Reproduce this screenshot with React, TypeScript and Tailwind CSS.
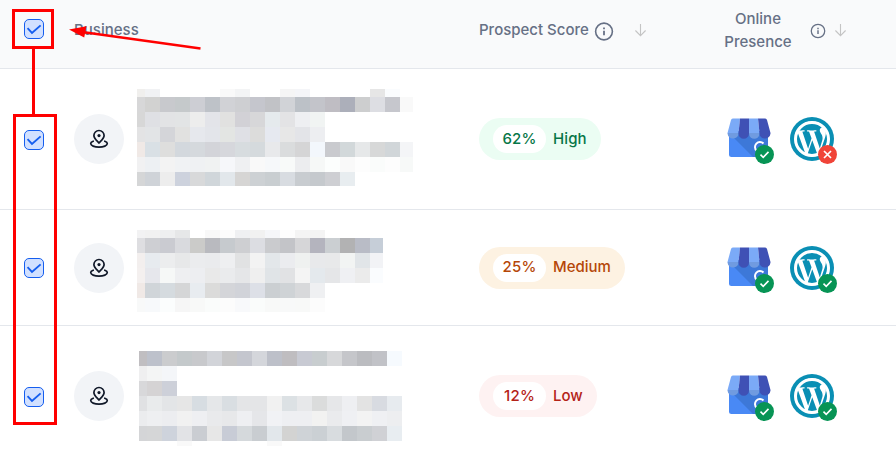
import clsx from 'clsx';
import { FaWordpressSimple } from 'react-icons/fa';

interface Mosaic {
  // width of the first and last column, the ones between are 15px
  edge: [number, number];
  heights: number[];
  rows: string[];
}

interface Prospect {
  id: number;
  score: number;
  level: 'High' | 'Medium' | 'Low';
  hasWordpress: boolean;
  rowClass: string;
  mosaicClass: string;
  mosaic: Mosaic;
}

const prospects: Prospect[] = [
  {
    id: 1,
    score: 62,
    level: 'High',
    hasWordpress: false,
    rowClass: 'h-[141px] border-b',
    mosaicClass: 'ml-[13px] mt-5',
    mosaic: {
      edge: [8, 13],
      heights: [8, 15, 15, 15, 15, 15, 14],
      rows: [
        'f0efed f1f2f4 - - - - f9f9f9 f3f4f5 - - f5f5f5 f4f5f8 - - - - e6e6e6 fafcfe -',
        'd7d7d8 d2d2d1 c8c9cd c5c9cb cdced4 bec2c8 d1d2d6 cecfd2 c5c6cd c1c2c6 d1d3d7 bcc1c7 c3c4ca bfbdc3 acafba cdcecf dddee3 c6c7cd f9f9f9',
        'd7d7d7 dfe0e4 e2e3e5 e2e4e5 ededed e3e4e9 e1e1e0 d2d1d6 d7d7d9 e5eaed e3e3e5 eeeff2 f1f4f3 - - - - - -',
        'e3e3e4 e2e4e6 d4d5d9 e1e1e0 e6e8ed e3e5ea e3e5e3 dfe0e5 dcdcdb e6e9f0 e7e7e7 e3e4e8 edeef1 - - - - - -',
        'f0e9e6 d9e0e5 dededd d3d8dd d5d9dd d3d4d9 d6d7dc d7dcdf d5dadd e8e9eb dadcdd d5d5d6 f3f7fc c9cace d2d8da e6e8e9 d7d8d8 d1d6d9 f4f5f7',
        'f1f1f2 edf0f3 f3f3f3 f0f2f4 eff1f3 f0f2f2 f6f7fa eff0f2 f9f9f9 f6f8fa f8faf9 ecedef f6f8f7 fcfefd f9f9f9 fdfdfd fafcfb fdfdfd f7f9f8',
        'd5d6d7 cfd3d8 ededed cdd2dd d8d9da d0d6da e2e7eb d6d5d4 cdd1d4 c9ced1 d8dce1 c8ccd0 c5c9cd cecfd3 e8edf0 - - - -',
      ],
    },
  },
  {
    id: 2,
    score: 25,
    level: 'Medium',
    hasWordpress: true,
    rowClass: 'h-[116px] border-b',
    mosaicClass: 'ml-[13px] mt-5',
    mosaic: {
      edge: [8, 13],
      heights: [8, 15, 15, 15, 15, 14],
      rows: [
        'f2f2f3 f1f1f1 eeeff0 e6e7e8 - f8f8f8 fcfcfc eff0f2 f1f1f1 f5f6f9 fdfdfd f4f4f4 f4f4f4 - - - -',
        'dedee1 cecfd3 cacbd1 d9dade cbcbc9 b9babf c6cace cecfd2 dcdde2 cacbce c3c4c8 d6d6d8 b4b4be cbcfd2 b2b2b3 b9bcc6 c6ced8',
        'f3efee e7ebef ecedee e7e8e9 ebecee eaebed eeeff1 e1e2e3 f3f3f3 e3e7ea ebecef eff1f0 e8e9eb e8e9ea f2f4f3 e1e5e8 f2f3f6',
        'f4f0ef e6e7ec f6f8f7 eeeff1 edeef1 e9e9e9 eaebed e5e6e8 efefef e0e4e7 e1e2e4 f4f4f4 e4e9ed e5e6e8 eff0f3 ebebeb fafcfe',
        'f0e9e6 d0d5d9 d5dbdf d5d6d7 e8ecf0 dbdbda d4d5d9 d1d3d9 dde0e7 cbcfd2 cfd3d6 d8d9db eff0f2 - - - -',
        'f8f9f9 f7f9fb fbfdfd f6f6f6 f8f9f8 fafcfb fcfcfc f8f9fb fafcfb f8f9f8 f8f9f9 f8f9f8 fcfcfc - - - -',
      ],
    },
  },
  {
    id: 3,
    score: 12,
    level: 'Low',
    hasWordpress: true,
    rowClass: 'h-[140px]',
    mosaicClass: 'ml-[15px] mt-[25px]',
    mosaic: {
      edge: [8, 15],
      heights: [15, 15, 15, 15, 15, 15, 5],
      rows: [
        'c0bec1 bdc1cb cbccce c4c9cb c8c9cc d2d4d9 c7c7c8 c4c6ce d4d6db bdc0c9 bfbdc0 c8cad3 c8cdcf d7d8da c5c6ca bbbcc0 c1c2c7 f6fafe',
        'efeff0 f4f5f5 f4f6f9 - - - - - - - - - - - - - - -',
        'd8d8da d5d3d4 cdd0d9 - - - - - - - - - - - - - - -',
        'e0e1e3 e9ebec e3e5e7 e6e6e6 d7dde2 e5e7e9 d9dee2 e4e5e7 e4e5e7 f1f1f1 dce1e4 e7e8ea dbdcdc e6e7e9 eeeff2 e3e3e3 d8dbe1 e7ebef',
        'ebecee eeeff1 ecedf0 f1f1f1 eeeff2 e9eaec e7e8ea eeeff2 e5e6e9 f1f2f5 eeeff2 eeeff2 f2f2f1 eaebed eff0f3 f3f3f3 eff0f3 edeef0',
        'd4d5d7 d5d6d7 ced3dc e2e3e6 cacdd2 e7e7e7 c8ccd6 d5d9dc c9cdd1 e2e7eb d3d3d2 cfd3d7 cbd0d4 d8dcdf c3c7cb c9cdd0 d0d1d5 e8edf1',
        '- - - f9f9f9 - - - - - f9f9f9 - - - - - - - -',
      ],
    },
  },
];

const levelClasses = {
  High: 'bg-[#ebfdf3] text-[#067647] tracking-[0.1px]',
  Medium: 'bg-[#fdf2e2] text-[#b54708]',
  Low: 'bg-[#fef2f2] text-[#b42318]',
};

const Checkbox = () => (
  <span className="block h-5 w-5 rounded-[5px] border border-[#155eef] bg-[#d1e0ff]">
    <svg viewBox="0 0 18 18" className="h-[18px] w-[18px]" fill="none">
      <path
        d="M3.2 8.8 7 12.9 14.9 6"
        stroke="#155eef"
        strokeWidth="1.9"
        strokeLinecap="square"
      />
    </svg>
  </span>
);

const InfoIcon = ({ className }: { className: string }) => (
  <svg viewBox="0 0 20 20" className={className} fill="none" stroke="#667085">
    <circle cx="10" cy="10" r="8.4" strokeWidth="1.6" />
    <path d="M10 9.2v4.6M10 6v1.7" strokeWidth="1.8" />
  </svg>
);

const SortArrow = () => (
  <svg
    viewBox="0 0 12 14"
    className="h-[14px] w-3 shrink-0"
    fill="none"
    stroke="#c4c4c4"
    strokeWidth="1.1"
  >
    <path d="M5.5 1v11.6M.4 7.5l5.1 5.2 5.1-5.2" />
  </svg>
);

const PinIcon = () => (
  <svg
    viewBox="0 0 20 20"
    className="h-5 w-5"
    fill="none"
    stroke="#101828"
    strokeWidth="1.7"
    strokeLinecap="round"
    strokeLinejoin="round"
  >
    <path d="M10 14C8.300 12 4.900 9.800 4.900 6.600a5.100 5.100 0 0 1 10.200 0c0 3.200-3.400 5.400-5.100 7.400Z" />
    <circle cx="10" cy="6.6" r="1.6" fill="#101828" stroke="none" />
    <path d="M4.200 12.200c-1.600.600-2.500 1.400-2.500 2.400 0 2 3.700 3.600 8.300 3.600s8.300-1.600 8.300-3.600c0-1-.900-1.800-2.500-2.400" />
  </svg>
);

const StatusBadge = ({ ok }: { ok: boolean }) => (
  <svg
    viewBox="0 0 19 19"
    className="absolute -right-[3px] top-[28px] h-[19px] w-[19px]"
    fill="none"
    stroke="white"
  >
    <circle cx="9.5" cy="9.5" r="9.5" fill={ok ? '#079455' : '#f04438'} stroke="none" />
    {ok ? (
      <path d="m5.5 9.7 2.7 2.6 5.3-5.4" strokeWidth="1.6" />
    ) : (
      <path d="m6 6 7 7m0-7-7 7" strokeWidth="1.7" />
    )}
  </svg>
);

const StoreIcon = () => (
  <svg viewBox="0 0 44 44" className="h-11 w-11">
    <path d="M2 14h39v23.5a2.5 2.5 0 0 1-2.5 2.5h-34A2.5 2.5 0 0 1 2 37.5Z" fill="#4989f5" />
    <path d="M5 19 26 40h12.5a2.5 2.5 0 0 0 2.5-2.5V14H12Z" fill="#3d78d8" />
    <path
      d="M36.5 26.5a5 5 0 1 0 .3 6.8"
      fill="none"
      stroke="white"
      strokeWidth="2"
    />
    <path d="M4 3a2 2 0 0 1 1.8-1.5H13L11.5 16H.5Z" fill="#7baaf7" />
    <path d="M13 1.5h9V16H11.5Z" fill="#3f51b5" />
    <path d="M22 1.5h9L32.5 16H22Z" fill="#7baaf7" />
    <path d="M31 1.5h7.2A2 2 0 0 1 40 3l3.5 13h-11Z" fill="#3f51b5" />
    <path d="M.5 16h11v.5a5 5 0 0 1-5 5 5.5 5.5 0 0 1-6-5Z" fill="#709be0" />
    <path d="M11.5 16H22v.5a5.2 5.2 0 0 1-10.5 0Z" fill="#3f51b5" />
    <path d="M22 16h10.5v.5a5.2 5.2 0 0 1-10.5 0Z" fill="#709be0" />
    <path d="M32.5 16h11v.5a5.5 5.5 0 0 1-6 5 5 5 0 0 1-5-5Z" fill="#3f51b5" />
  </svg>
);

const BlurredDetails = ({ mosaic }: { mosaic: Mosaic }) => (
  <div>
    {mosaic.rows.map((row, y) => {
      const cells = row.split(' ');
      return (
        <div key={y} className="flex" style={{ height: mosaic.heights[y] }}>
          {cells.map((color, x) => (
            <span
              key={x}
              style={{
                width:
                  x === 0
                    ? mosaic.edge[0]
                    : x === cells.length - 1
                      ? mosaic.edge[1]
                      : 15,
                background: color === '-' ? undefined : `#${color}`,
              }}
            />
          ))}
        </div>
      );
    })}
  </div>
);

const ScorePill = ({ score, level }: Pick<Prospect, 'score' | 'level'>) => (
  <span
    className={clsx(
      'flex h-[42px] w-fit items-center rounded-full px-[14px] text-[15px] font-medium',
      levelClasses[level]
    )}
  >
    <span className="mr-[7px] flex h-7 w-[53px] items-center justify-center rounded-full bg-white tracking-[0.2px]">
      {score}%
    </span>
    {level}
  </span>
);

// Red markup drawn over the table
const Annotations = () => (
  <svg
    viewBox="0 0 896 458"
    className="pointer-events-none absolute left-0 top-0 h-[458px] w-[896px]"
    fill="none"
    stroke="#ff0000"
    strokeWidth="3"
  >
    <path d="M13.5 10.5h39v37h-39ZM33.5 47v68M14.5 115.5h41v308h-41Z" />
    <path d="M84 32.3 200.5 48.5" strokeWidth="2.4" />
    <path d="m69 29.5 17.5-3.3-2.3 11.3Z" fill="#ff0000" stroke="none" />
  </svg>
);

const App = () => (
  <div className="relative h-[458px] w-[896px] overflow-hidden bg-white font-['Inter',sans-serif]">
    <div className="grid h-[69px] grid-cols-[74px_405px_245px_1fr] items-center border-b border-[#e4e7ec] bg-[#f9fafb] text-[15px] font-medium leading-[23px] text-[#667085]">
      <div className="-mt-[10px] pl-6">
        <Checkbox />
      </div>
      <div className="-mt-[9px]">Business</div>
      <div className="-mt-[9px] flex items-center">
        Prospect Score
        <InfoIcon className="ml-[5px] h-5 w-5 translate-y-[1.5px]" />
        <span className="ml-[21px] mt-px">
          <SortArrow />
        </span>
      </div>
      <div className="-mt-2 flex items-center">
        <div className="w-[68px] text-center">
          Online
          <br />
          Presence
        </div>
        <InfoIcon className="ml-[18px] mt-0.5 h-4 w-4" />
        <span className="ml-[9px]">
          <SortArrow />
        </span>
      </div>
    </div>

    {prospects.map((prospect) => (
      <div
        key={prospect.id}
        className={clsx(
          'grid grid-cols-[74px_50px_355px_248px_1fr] items-center border-[#e4e7ec]',
          prospect.rowClass
        )}
      >
        <div className="pl-6 pt-px">
          <Checkbox />
        </div>
        <div className="flex h-[50px] w-[50px] items-center justify-center rounded-full bg-[#f2f4f7]">
          <PinIcon />
        </div>
        <div className={clsx('self-start', prospect.mosaicClass)}>
          <BlurredDetails mosaic={prospect.mosaic} />
        </div>
        <div>
          <ScorePill score={prospect.score} level={prospect.level} />
        </div>
        <div className="flex gap-[19px]">
          <div className="relative">
            <StoreIcon />
            <StatusBadge ok />
          </div>
          <div className="relative flex h-11 w-11 items-center justify-center rounded-full bg-[#0a8fb4]">
            <FaWordpressSimple className="h-9 w-9 text-white" />
            {/* thickens the logo's thin outer ring */}
            <span className="absolute inset-[4px] rounded-full border-[3px] border-white" />
            <StatusBadge ok={prospect.hasWordpress} />
          </div>
        </div>
      </div>
    ))}

    <Annotations />
  </div>
);

export default App;
